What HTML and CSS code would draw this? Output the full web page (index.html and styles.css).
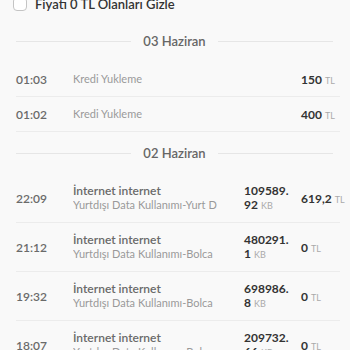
FILE: index.html
```html
<!DOCTYPE html>
<html lang="tr">
<head>
<meta charset="utf-8">
<link rel="stylesheet" href="styles.css">
</head>
<body>
<div class="filter">
  <span class="checkbox"></span>
  <span class="filter-label">Fiyatı 0 TL Olanları Gizle</span>
</div>
<div class="list">
  <div class="day-header"><span class="line"></span><span class="day">03 Haziran</span><span class="line"></span></div>
  <div class="row short">
    <span class="time">01:03</span>
    <span class="desc"><span class="sub">Kredi Yukleme</span></span>
    <span class="vol"></span>
    <span class="amount"><b>150</b> <small>TL</small></span>
  </div>
  <div class="row short">
    <span class="time">01:02</span>
    <span class="desc"><span class="sub">Kredi Yukleme</span></span>
    <span class="vol"></span>
    <span class="amount"><b>400</b> <small>TL</small></span>
  </div>
  <div class="day-header"><span class="line"></span><span class="day">02 Haziran</span><span class="line"></span></div>
  <div class="row">
    <span class="time">22:09</span>
    <span class="desc"><span class="title">İnternet internet</span><span class="sub">Yurtdışı Data Kullanımı-Yurt D</span></span>
    <span class="vol"><b>109589.<br>92</b> <small>KB</small></span>
    <span class="amount"><b>619,2</b> <small>TL</small></span>
  </div>
  <div class="row">
    <span class="time">21:12</span>
    <span class="desc"><span class="title">İnternet internet</span><span class="sub">Yurtdışı Data Kullanımı-Bolca</span></span>
    <span class="vol"><b>480291.<br>1</b> <small>KB</small></span>
    <span class="amount"><b>0</b> <small>TL</small></span>
  </div>
  <div class="row">
    <span class="time">19:32</span>
    <span class="desc"><span class="title">İnternet internet</span><span class="sub">Yurtdışı Data Kullanımı-Bolca</span></span>
    <span class="vol"><b>698986.<br>8</b> <small>KB</small></span>
    <span class="amount"><b>0</b> <small>TL</small></span>
  </div>
  <div class="row">
    <span class="time">18:07</span>
    <span class="desc"><span class="title">İnternet internet</span><span class="sub">Yurtdışı Data Kullanımı-Bolca</span></span>
    <span class="vol"><b>209732.<br>66</b> <small>KB</small></span>
    <span class="amount"><b>0</b> <small>TL</small></span>
  </div>
</div>
</body>
</html>
```

FILE: styles.css
```css
html, body {
  margin: 0;
  padding: 0;
  background: #f9f9f9;
  font-family: Lato, "Noto Sans", sans-serif;
  overflow: hidden;
}

.filter {
  display: flex;
  align-items: center;
  gap: 8px;
  height: 24px;
  margin-top: -8px;
  padding-left: 13px;
}

.checkbox {
  width: 12px;
  height: 12px;
  border: 1.5px solid #c4c4c4;
  border-radius: 4px;
  background: #fff;
}

.filter-label {
  font-size: 13px;
  font-weight: 600;
  color: #333;
}

.list {
  padding: 0 10px 0 16px;
  margin-top: 4px;
}

.day-header {
  display: flex;
  align-items: center;
  gap: 12px;
  height: 42px;
  padding-right: 7px;
}

.line {
  flex: 1;
  height: 1px;
  background: #e6e6e6;
}

.day {
  font-size: 13px;
  font-weight: 600;
  color: #666;
}

.row {
  display: grid;
  grid-template-columns: 57px 171px 57px 1fr;
  align-items: center;
  height: 48px;
  border-bottom: 1.5px solid #ececec;
}

.row.short {
  height: 34px;
}

.time {
  font-size: 12px;
  font-weight: 600;
  color: #6a6a6a;
}

.desc {
  display: flex;
  flex-direction: column;
  white-space: nowrap;
  overflow: hidden;
  padding-right: 8px;
}

.title {
  font-size: 12px;
  font-weight: 600;
  color: #6a6a6a;
  line-height: 14px;
}

.sub {
  font-size: 11px;
  color: #999;
  line-height: 14px;
}

.vol {
  font-size: 12px;
  line-height: 14px;
  color: #333;
}

.vol b, .amount b {
  font-weight: 700;
  color: #333;
}

small {
  font-size: 9px;
  color: #aaa;
}

.amount {
  font-size: 12px;
  white-space: nowrap;
}
```
